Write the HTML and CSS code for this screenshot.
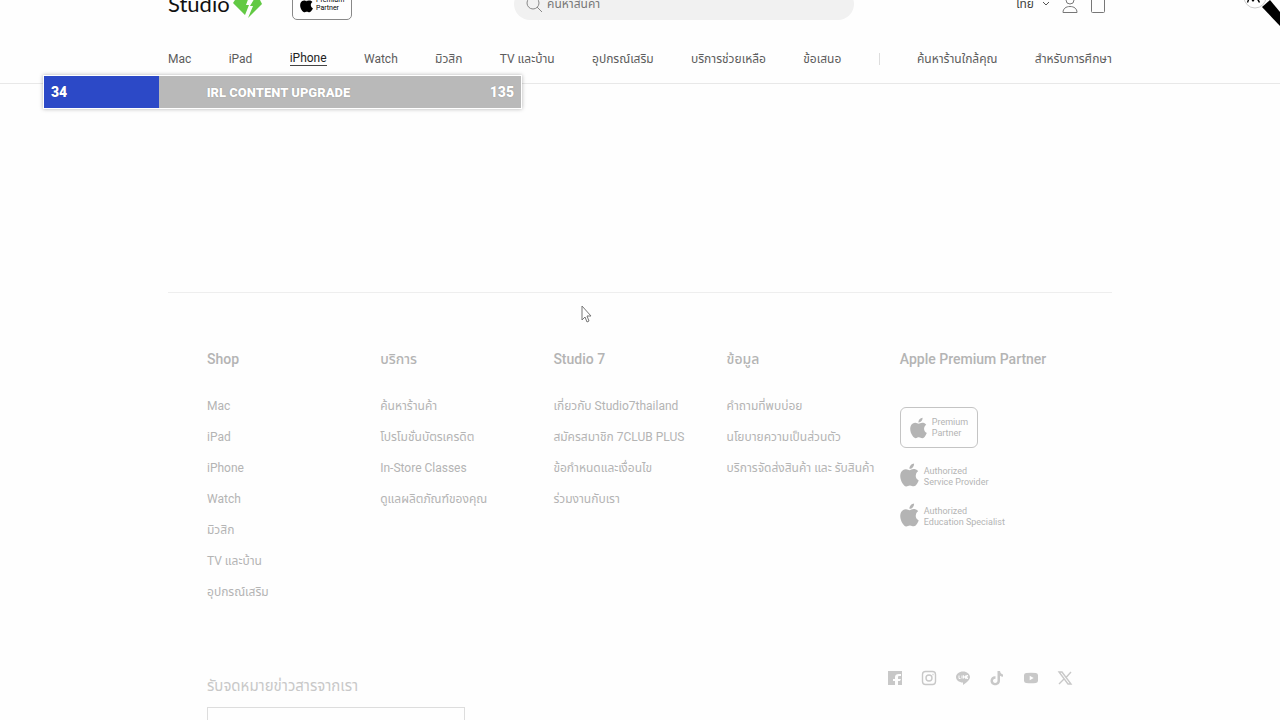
FILE: index.html
```html
<!DOCTYPE html>
<html lang="th">

<head>
  <meta charset="utf-8">
  <title>Studio 7</title>
  <link rel="stylesheet" href="styles.css">
</head>

<body>
  <svg class="symbols" aria-hidden="true">
    <symbol id="apple" viewBox="2 0 20 24">
      <path d="M12.152 6.896c-.948 0-2.415-1.078-3.96-1.04-2.04.027-3.91 1.183-4.961 3.014-2.117 3.675-.546 9.103 1.519 12.09 1.013 1.454 2.208 3.09 3.792 3.039 1.52-.065 2.09-.987 3.935-.987 1.831 0 2.35.987 3.96.948 1.637-.026 2.676-1.48 3.676-2.948 1.156-1.688 1.636-3.325 1.662-3.415-.039-.013-3.182-1.221-3.22-4.857-.026-3.04 2.48-4.494 2.597-4.559-1.429-2.09-3.623-2.324-4.39-2.376-2-.156-3.675 1.09-4.61 1.09zM15.53 3.83c.843-1.012 1.4-2.427 1.245-3.83-1.207.052-2.662.805-3.532 1.818-.78.896-1.454 2.338-1.273 3.714 1.338.104 2.715-.688 3.559-1.701" />
    </symbol>
  </svg>

  <header class="header">
    <div class="wrap topbar">
      <a class="logo" href="#">
        <span>Studio</span>
        <svg class="logo-mark" viewBox="0 0 30 36">
          <path d="M1 19L7 10H18L14 21L17 21L13 31Z" />
          <path d="M24 12L27 14L30 20L16 34L21 22L18 22Z" />
        </svg>
      </a>
      <div class="badge badge-small">
        <svg><use href="#apple" /></svg>
        <span>Premium<br>Partner</span>
      </div>
      <form class="search">
        <svg viewBox="0 0 18 18">
          <circle cx="8" cy="8" r="6" />
          <path d="M12 12L17 17" />
        </svg>
        <input type="search" aria-label="ค้นหาสินค้า" placeholder="ค้นหาสินค้า">
      </form>
      <div class="tools">
        <button class="language" type="button">ไทย
          <svg class="chevron" viewBox="0 0 8 6"><path d="M1 1L4 4L7 1" /></svg>
        </button>
        <a href="#" aria-label="บัญชี">
          <svg class="tool-icon" viewBox="0 0 16 20">
            <circle cx="8" cy="6" r="4" />
            <path d="M1 18.500c0-4 3-6 7-6s7 2 7 6z" />
          </svg>
        </a>
        <a href="#" aria-label="ตะกร้า">
          <svg class="tool-icon" viewBox="0 0 16 20">
            <path d="M1.500 5.500h13v12q0 1-1 1h-11q-1 0-1-1zM5 5.500q0-4 3-4t3 4" />
          </svg>
        </a>
      </div>
    </div>
    <nav class="wrap nav">
      <a href="#">Mac</a>
      <a href="#">iPad</a>
      <a class="active" href="#">iPhone</a>
      <a href="#">Watch</a>
      <a href="#">มิวสิก</a>
      <a href="#">TV และบ้าน</a>
      <a href="#">อุปกรณ์เสริม</a>
      <a href="#">บริการช่วยเหลือ</a>
      <a href="#">ข้อเสนอ</a>
      <span class="divider"></span>
      <a href="#">ค้นหาร้านใกล้คุณ</a>
      <a href="#">สำหรับการศึกษา</a>
    </nav>
  </header>

  <main class="content"></main>

  <footer class="wrap footer">
    <div class="columns">
      <section>
        <h2>Shop</h2>
        <ul>
          <li><a href="#">Mac</a></li>
          <li><a href="#">iPad</a></li>
          <li><a href="#">iPhone</a></li>
          <li><a href="#">Watch</a></li>
          <li><a href="#">มิวสิก</a></li>
          <li><a href="#">TV และบ้าน</a></li>
          <li><a href="#">อุปกรณ์เสริม</a></li>
        </ul>
      </section>
      <section>
        <h2>บริการ</h2>
        <ul>
          <li><a href="#">ค้นหาร้านค้า</a></li>
          <li><a href="#">โปรโมชั่นบัตรเครดิต</a></li>
          <li><a href="#">In-Store Classes</a></li>
          <li><a href="#">ดูแลผลิตภัณฑ์ของคุณ</a></li>
        </ul>
      </section>
      <section>
        <h2>Studio 7</h2>
        <ul>
          <li><a href="#">เกี่ยวกับ Studio7thailand</a></li>
          <li><a href="#">สมัครสมาชิก 7CLUB PLUS</a></li>
          <li><a href="#">ข้อกำหนดและเงื่อนไข</a></li>
          <li><a href="#">ร่วมงานกับเรา</a></li>
        </ul>
      </section>
      <section>
        <h2>ข้อมูล</h2>
        <ul>
          <li><a href="#">คำถามที่พบบ่อย</a></li>
          <li><a href="#">นโยบายความเป็นส่วนตัว</a></li>
          <li><a href="#">บริการจัดส่งสินค้า และ รับสินค้า</a></li>
        </ul>
      </section>
      <section>
        <h2>Apple Premium Partner</h2>
        <div class="partners">
          <div class="badge">
            <svg><use href="#apple" /></svg>
            <span>Premium<br>Partner</span>
          </div>
          <div class="partner">
            <svg><use href="#apple" /></svg>
            <span>Authorized<br>Service Provider</span>
          </div>
          <div class="partner">
            <svg><use href="#apple" /></svg>
            <span>Authorized<br>Education Specialist</span>
          </div>
        </div>
      </section>
    </div>

    <div class="bottom">
      <form class="newsletter">
        <label for="email">รับจดหมายข่าวสารจากเรา</label>
        <input type="email" id="email">
      </form>
      <div class="social">
        <a href="#" aria-label="Facebook"><svg viewBox="0 0 16 16">
            <path d="M1 1h14v14h-4v-4h2l1-2h-3V7q0-1 1-1h2V4h-2q-4 0-4 3v2H6v2h2v4H1z" />
          </svg></a>
        <a href="#" aria-label="Instagram"><svg class="outline" viewBox="0 0 16 16">
            <rect x="1.500" y="1.500" width="13" height="13" rx="3" />
            <circle cx="8" cy="8" r="3" />
            <path d="M11.500 4.500h1" />
          </svg></a>
        <a href="#" aria-label="LINE"><svg viewBox="0 0 16 16">
            <path d="M8 1.500c4 0 7 2.500 7 5.500 0 3-3 5-7 8v-2.500C4 12.500 1 10 1 7s3-5.500 7-5.500z" />
            <path class="cut" d="M4 5.500v3h1.500M7 5.500v3M8.500 8.500v-3l2 3v-3M13 5.500h-1.500v3H13M11.500 7H13" />
          </svg></a>
        <a href="#" aria-label="TikTok"><svg viewBox="0 0 16 16">
            <path d="M8.500 1H11c.2 2 1.300 3.200 3 3.400v2.400c-1.200 0-2.200-.4-3-1v5c0 6-9.500 6-9.500 0 0-3 2.300-4.900 5-4.600v2.600c-3.200-.5-3.300 4.200-.4 4.200 1.500 0 2.400-.8 2.400-2.400z" />
          </svg></a>
        <a href="#" aria-label="YouTube"><svg viewBox="0 0 16 16">
            <path fill-rule="evenodd" d="M3 3q5-.6 10 0 2 .2 2 2.200v5.600q0 2-2 2.200-5 .6-10 0-2-.2-2-2.200V5.200Q1 3.200 3 3zm3.700 2.700v4.600l4-2.300z" />
          </svg></a>
        <a href="#" aria-label="X"><svg class="outline" viewBox="0 0 16 16">
            <path d="M2 2h3l9 12h-3zM14 2L9 7.500M7 9l-5 5" />
          </svg></a>
      </div>
    </div>
  </footer>

  <div class="goal">
    <div class="goal-fill" style="width: 24.2%"></div>
    <span>34</span>
    <span class="goal-title">IRL CONTENT UPGRADE</span>
    <span>135</span>
  </div>

  <svg class="strap" viewBox="0 0 40 30">
    <path d="M22 7L30 0L40 12V26Z" />
    <circle class="medal" cx="15" cy="-3" r="11" />
    <path d="M8 3l2-5 3 4 3-4 3 5 1-1-3-6H9L7 2z" />
  </svg>

  <svg class="cursor" viewBox="0 0 12 18">
    <path d="M1 1v14l3-3 2 5 2-1-2-5h4z" />
  </svg>
</body>

</html>
```
FILE: styles.css
```css
* {
  box-sizing: border-box;
  margin: 0;
  padding: 0;
}

body {
  height: 100vh;
  overflow: hidden;
  background-color: #fefefe;
  color: #5c5c5c;
  font-family: Roboto, "Noto Sans Thai", "Noto Sans", sans-serif;
  font-size: 12px;
}

a {
  color: inherit;
  text-decoration: none;
}

ul {
  list-style: none;
}

.symbols {
  display: none;
}

.wrap {
  margin: 0 168px;
}

/* header, partly scrolled off the top */
.header {
  margin-top: -20px;
  border-bottom: 1px solid #e8e8e8;
}

.topbar {
  display: flex;
  align-items: flex-end;
  height: 40px;
}

.logo {
  display: flex;
  align-items: flex-end;
  gap: 2px;
  width: 124px;
  color: #111;
  font-family: Lato, sans-serif;
  font-size: 22px;
  line-height: 32px;
}

.logo-mark {
  width: 30px;
  height: 36px;
  fill: #62c944;
}

.badge {
  display: flex;
  align-items: center;
  gap: 5px;
  width: 78px;
  height: 41px;
  padding: 0 9px;
  border: 1px solid #c4c4c4;
  border-radius: 6px;
  font-size: 9px;
  line-height: 11px;
}

.badge svg {
  flex: none;
  width: 17px;
  height: 22px;
  fill: currentColor;
}

.badge-small {
  gap: 3px;
  width: 60px;
  height: 32px;
  padding: 0 7px;
  border-color: #888;
  border-radius: 5px;
  color: #000;
  font-size: 7px;
  line-height: 8px;
}

.badge-small svg {
  width: 13px;
  height: 17px;
}

.search {
  display: flex;
  align-items: center;
  gap: 4px;
  width: 36%;
  height: 32px;
  margin-left: auto;
  padding: 0 11px;
  border-radius: 16px;
  background-color: #f1f1f1;
}

.search svg {
  width: 18px;
  height: 18px;
  fill: none;
  stroke: #888;
}

.search input {
  flex: 1;
  border: 0;
  background: none;
  font: inherit;
}

.search input::placeholder {
  color: #777;
}

.tools {
  display: flex;
  align-items: center;
  gap: 12px;
  height: 32px;
  margin-left: auto;
  padding-right: 6px;
}

.language {
  display: flex;
  align-items: center;
  gap: 8px;
  border: 0;
  background: none;
  color: #444;
  font: inherit;
}

.chevron {
  width: 8px;
  height: 6px;
  fill: none;
  stroke: #555;
}

.tool-icon {
  display: block;
  width: 16px;
  height: 20px;
  fill: none;
  stroke: #777;
}

.nav {
  display: flex;
  justify-content: space-between;
  align-items: center;
  height: 63px;
  padding-top: 14px;
  white-space: nowrap;
}

.nav .active {
  border-bottom: 1px solid #444;
  color: #222;
}

.divider {
  width: 1px;
  height: 12px;
  background-color: #ddd;
}

.content {
  height: 208px;
}

.footer {
  padding: 56px 39px 0;
  border-top: 1px solid #eee;
  color: #b4b4b4;
}

.columns {
  display: grid;
  grid-template-columns: repeat(5, 1fr);
  height: 321px;
  white-space: nowrap;
}

.columns h2 {
  margin-bottom: 29px;
  font-size: 14px;
  font-weight: 500;
  line-height: 20px;
}

.columns li {
  height: 31px;
  line-height: 16px;
}

.partners {
  display: flex;
  flex-direction: column;
  gap: 14px;
  margin-top: 38px;
}

.partner {
  display: flex;
  align-items: flex-end;
  gap: 5px;
  height: 26px;
  font-size: 9px;
  line-height: 11px;
}

.partner svg {
  width: 19px;
  height: 26px;
  fill: currentColor;
}

.bottom {
  display: flex;
  justify-content: space-between;
  align-items: flex-start;
  color: #c8c8c8;
}

.newsletter {
  width: 258px;
  padding-top: 6px;
}

.newsletter label {
  display: block;
  margin-bottom: 11px;
  font-size: 15px;
  line-height: 20px;
}

.newsletter input {
  width: 100%;
  height: 36px;
  border: 1px solid #ddd;
  background: none;
}

.social {
  display: flex;
  gap: 18px;
}

.social svg {
  display: block;
  width: 16px;
  height: 16px;
  fill: currentColor;
}

.social .outline {
  fill: none;
  stroke: currentColor;
  stroke-width: 1.4;
}

.social .cut {
  fill: none;
  stroke: #fefefe;
}

/* stream overlay */
.goal {
  position: absolute;
  top: 75px;
  left: 43px;
  display: flex;
  justify-content: space-between;
  align-items: center;
  width: 479px;
  height: 34px;
  padding: 0 7px;
  border: 1px solid #fff;
  background-color: #b9b9b9;
  box-shadow: 0 0 4px rgba(0, 0, 0, 0.3);
  color: #fff;
  font-family: Roboto, sans-serif;
  font-size: 14px;
  font-weight: 900;
  text-shadow: 0 0 1px rgba(0, 0, 0, 0.3);
}

.goal span {
  position: relative;
}

.goal-title {
  font-size: 13px;
}

.goal-fill {
  position: absolute;
  top: 0;
  bottom: 0;
  left: 0;
  background-color: #2c49c7;
}

.strap {
  position: absolute;
  top: 0;
  right: 0;
  width: 40px;
  height: 30px;
}

.medal {
  fill: #fff;
  stroke: #ccc;
}

.cursor {
  position: absolute;
  top: 305px;
  left: 581px;
  width: 12px;
  height: 18px;
  fill: #fff;
  stroke: #777;
}
```
